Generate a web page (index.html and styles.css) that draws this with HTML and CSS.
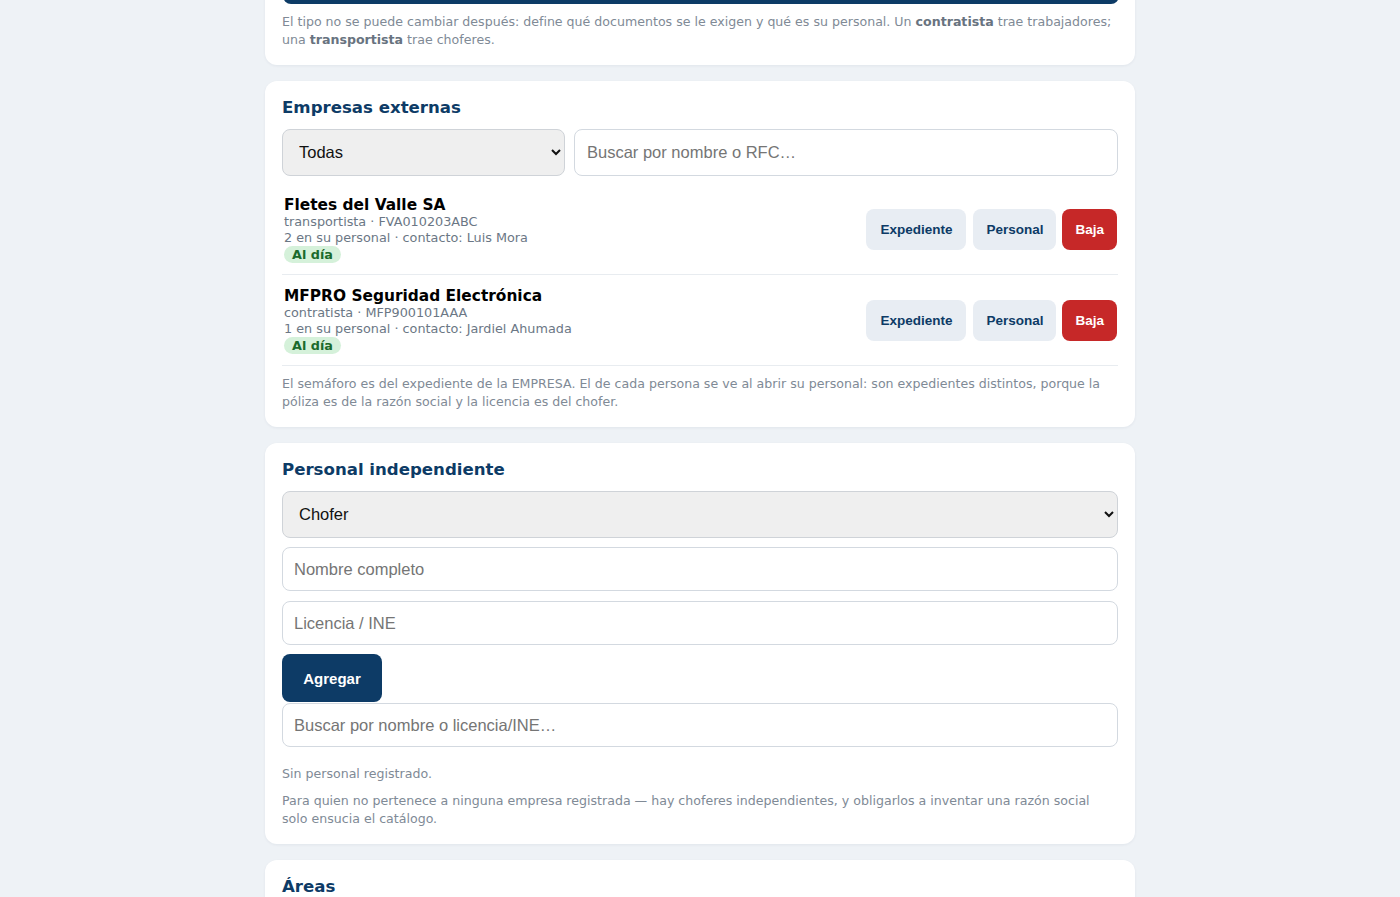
FILE: index.html
```html
<!DOCTYPE html>
<html lang="es">
<head>
<meta charset="utf-8">
<title>Catálogo</title>
<link rel="stylesheet" href="styles.css">
</head>
<body>
<main class="page">
  <section class="card card-first">
    <button class="btn-primary btn-wide">Registrar empresa</button>
    <p class="note">El tipo no se puede cambiar después: define qué documentos se le exigen y qué es su personal. Un <b>contratista</b> trae trabajadores; una <b>transportista</b> trae choferes.</p>
  </section>

  <section class="card">
    <h2 class="card-title">Empresas externas</h2>
    <div class="filters">
      <select class="field field-select"><option>Todas</option></select>
      <input class="field field-tall" type="text" placeholder="Buscar por nombre o RFC…">
    </div>
    <ul class="company-list">
      <li class="company">
        <div class="company-info">
          <div class="company-name">Fletes del Valle SA</div>
          <div class="company-meta">transportista · FVA010203ABC</div>
          <div class="company-meta">2 en su personal · contacto: Luis Mora</div>
          <span class="badge">Al día</span>
        </div>
        <div class="actions">
          <button class="btn-soft">Expediente</button>
          <button class="btn-soft">Personal</button>
          <button class="btn-danger">Baja</button>
        </div>
      </li>
      <li class="company">
        <div class="company-info">
          <div class="company-name">MFPRO Seguridad Electrónica</div>
          <div class="company-meta">contratista · MFP900101AAA</div>
          <div class="company-meta">1 en su personal · contacto: Jardiel Ahumada</div>
          <span class="badge">Al día</span>
        </div>
        <div class="actions">
          <button class="btn-soft">Expediente</button>
          <button class="btn-soft">Personal</button>
          <button class="btn-danger">Baja</button>
        </div>
      </li>
    </ul>
    <p class="note note-after">El semáforo es del expediente de la EMPRESA. El de cada persona se ve al abrir su personal: son expedientes distintos, porque la póliza es de la razón social y la licencia es del chofer.</p>
  </section>

  <section class="card">
    <h2 class="card-title">Personal independiente</h2>
    <div class="form">
      <select class="field field-select"><option>Chofer</option></select>
      <input class="field field-name" type="text" placeholder="Nombre completo">
      <input class="field field-id" type="text" placeholder="Licencia / INE">
      <button class="btn-primary btn-add">Agregar</button>
      <input class="field field-search" type="text" placeholder="Buscar por nombre o licencia/INE…">
    </div>
    <p class="note note-empty">Sin personal registrado.</p>
    <p class="note note-last">Para quien no pertenece a ninguna empresa registrada — hay choferes independientes, y obligarlos a inventar una razón social solo ensucia el catálogo.</p>
  </section>

  <section class="card">
    <h2 class="card-title">Áreas</h2>
  </section>
</main>
</body>
</html>
```

FILE: styles.css
```css
* { box-sizing: border-box; }

html, body {
  margin: 0;
  padding: 0;
  background: #eef2f6;
  font-family: "DejaVu Sans", "Noto Sans", sans-serif;
  color: #1f2933;
  overflow: hidden;
}

.page {
  width: 870px;
  margin: 0 auto;
  display: flex;
  flex-direction: column;
  gap: 16px;
}

.card {
  background: #ffffff;
  border-radius: 12px;
  padding: 17px 17px 16px;
  box-shadow: 0 1px 3px rgba(20, 40, 70, 0.06);
}

.card-first {
  margin-top: -57px;
}

.card-title {
  margin: 0 0 11px;
  font-size: 16.6px;
  line-height: 20px;
  font-weight: bold;
  color: #0d3b66;
}

.note {
  margin: 0;
  font-size: 12.6px;
  line-height: 18px;
  color: #808a96;
}

.note b {
  color: #687380;
}

.btn-primary {
  display: block;
  border: none;
  border-radius: 8px;
  background: #0d3b66;
  color: #ffffff;
  font-family: "Liberation Sans", Arial, sans-serif;
  font-weight: bold;
  font-size: 15px;
}

.btn-wide {
  width: 100%;
  height: 44px;
  margin-bottom: 9px;
  margin-left: 1px;
}

.filters {
  display: grid;
  grid-template-columns: 283px 1fr;
  gap: 9px;
}

.field {
  display: block;
  width: 100%;
  height: 44px;
  padding: 0 11px;
  border: 1px solid #d3d9e0;
  border-radius: 8px;
  background: #ffffff;
  font-family: "Liberation Sans", Arial, sans-serif;
  font-size: 16.5px;
  color: #222222;
}

.field::placeholder {
  color: #757575;
}

.field-tall {
  height: 47px;
  padding-left: 12px;
}

.field-select {
  height: 47px;
  padding-left: 12px;
  padding-bottom: 1px;
  background: #efefef;
  color: #111111;
  border-color: #cfd3d8;
}

.company-list {
  list-style: none;
  margin: 8px 0 0;
  padding: 0;
}

.company {
  display: flex;
  align-items: center;
  justify-content: space-between;
  padding: 12px 1px 11px 2px;
  border-bottom: 1px solid #e8ecf0;
}

.company-info {
  display: flex;
  flex-direction: column;
  align-items: flex-start;
}

.company-name {
  font-size: 15.4px;
  line-height: 18px;
  font-weight: bold;
  color: #000000;
}

.company-meta {
  font-size: 12.8px;
  line-height: 16px;
  color: #6b7785;
}

.badge {
  display: inline-block;
  padding: 0 8px;
  height: 17px;
  line-height: 17px;
  border-radius: 9px;
  background: #d5f1da;
  color: #1b6a2c;
  font-size: 12.8px;
  font-weight: bold;
}

.actions {
  display: flex;
  gap: 6px;
}

.btn-soft,
.btn-danger {
  height: 41px;
  border: none;
  border-radius: 8px;
  font-family: "Liberation Sans", Arial, sans-serif;
  font-weight: bold;
  font-size: 13.5px;
}

.btn-soft {
  padding: 0 13px;
  background: #e8edf3;
  color: #0d3b66;
}

.btn-soft:first-child {
  padding: 0 14px;
  margin-right: 1px;
}

.btn-danger {
  padding: 0 13px;
  background: #c62828;
  color: #ffffff;
}

.note-after {
  margin-top: 9px;
}

.form {
  display: flex;
  flex-direction: column;
  align-items: flex-start;
}

.form .field-select {
  margin-bottom: 9px;
}

.form .field-name {
  margin-bottom: 10px;
}

.form .field-id {
  margin-bottom: 9px;
}

.btn-add {
  width: 100px;
  height: 48px;
  margin-bottom: 1px;
}

.form .field-search {
  margin-bottom: 0;
}

.note-empty {
  margin-top: 18px;
}

.note-last {
  margin-top: 9px;
}
```
